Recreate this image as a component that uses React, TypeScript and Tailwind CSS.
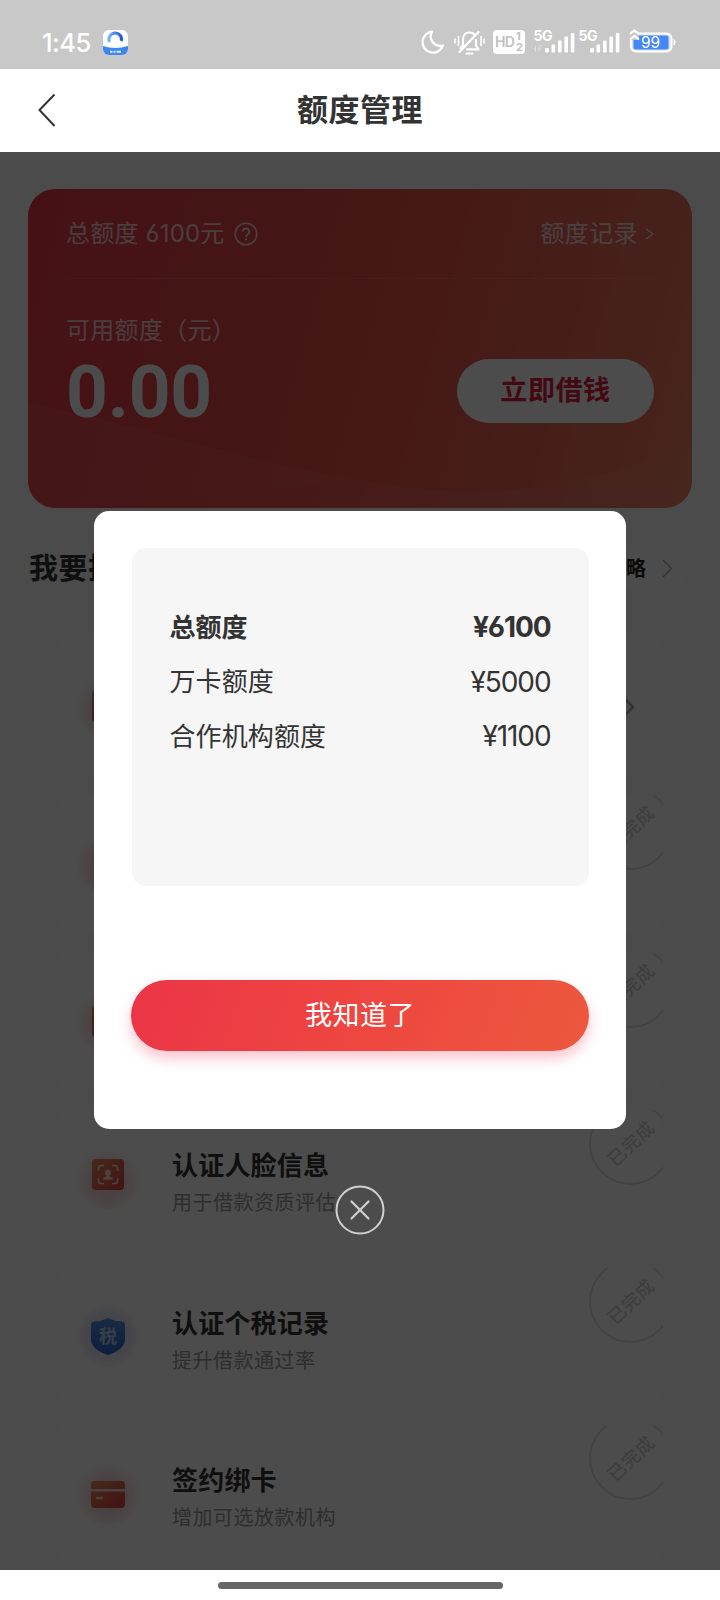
import React from "react";

function StatusBar() {
  return (
    <div className="flex h-[69px] items-start bg-[#c8c8c8] text-white">
      <div className="ml-[42px] mt-[29px] w-[51px] whitespace-nowrap text-[25.500px] font-medium leading-[28px] tracking-[-0.5px]">1:45</div>
      <svg className="ml-[10px] mt-[30px]" width="25" height="25" viewBox="0 0 25 25">
        <defs>
          <clipPath id="appClip"><rect width="25" height="25" rx="6" /></clipPath>
          <linearGradient id="arc" x1="0" x2="1"><stop offset="0" stopColor="#6fb6fb" /><stop offset="1" stopColor="#2455e0" /></linearGradient>
        </defs>
        <g clipPath="url(#appClip)">
          <rect width="25" height="25" fill="#fff" />
          <path d="M0 16 Q12 20 25 16 V25 H0Z" fill="#3d86ee" />
          <path d="M6.500 12 A6.300 6.300 0 1 1 18.300 11" fill="none" stroke="url(#arc)" strokeWidth="3" />
          <path d="M7 21.800h2.500M10.500 21.800h2M13.500 21.800h4.500" stroke="#d6e8ff" strokeWidth="2" />
        </g>
      </svg>
      <svg className="ml-[292px] mt-[28px]" width="26" height="28" viewBox="0 0 26 28" fill="none" stroke="#fff" strokeWidth="2.300" strokeLinejoin="round">
        <path d="M12 3.700A10.500 10.500 0 1 0 23 17.500A9.500 9.500 0 0 1 12 3.700Z" />
      </svg>
      <svg className="ml-[7px] mt-[27px]" width="32" height="30" viewBox="0 0 32 30" fill="none" stroke="#fff" strokeWidth="2.200" strokeLinecap="round" strokeLinejoin="round">
        <path d="M7.500 21L10 18.500v-6c0-4 2.500-7 6.500-7 2.500 0 4.400 1 5.600 2.800M14 22.300h11.500L23 18.500V13M6.500 25L25.500 5M13.500 26.500h6" />
        <path d="M5.500 9.500v9M2 12v4M28 9.500v9M31 12v4" strokeWidth="1.600" />
      </svg>
      <div className="ml-[8px] mt-[30px] flex h-[24px] w-[32px] items-center rounded-[4px] bg-white pl-[2px] text-[#c0c0c0]">
        <span className="text-[14px] font-semibold leading-[24px] tracking-[-0.8px]">HD</span>
        <span className="ml-[2px] flex flex-col text-[11px] font-bold leading-[11px]"><span>1</span><span>2</span></span>
      </div>
      <Signal sub />
      <Signal />
      <svg className="ml-[7px] mt-[28px]" width="48" height="26" viewBox="0 0 48 26">
        <rect x="3" y="5.500" width="40.500" height="18" rx="5" fill="#d9dde6" stroke="#fff" strokeWidth="2" />
        <rect x="5.500" y="7.500" width="35" height="14" rx="2" fill="#4388f7" />
        <path d="M46 11.500q2.500 2.500 0 5.500z" fill="#fff" stroke="#fff" />
        <path d="M1 5h10v7H1z" fill="#c8c8c8" />
        <path d="M2 6L6.500 2.500L11 6M2 11.500L6.500 8L11 11.500" fill="none" stroke="#fff" strokeWidth="2.200" />
        <text x="22.500" y="20" textAnchor="middle" fontSize="15.500" fill="#fff" fontFamily="Inter">99</text>
      </svg>
    </div>
  );
}

function Signal({ sub = false }: { sub?: boolean }) {
  return (
    <svg className={sub ? "ml-[7px] mt-[28px]" : "ml-[1px] mt-[28px]"} width="44" height="26" viewBox="0 0 44 26" fill="#fff">
      <text x="1.500" y="12.500" fontSize="14" fontWeight="700" fontFamily="Inter" letterSpacing="-0.400">5G</text>
      {sub && <path d="M1 21h3M3.500 18v6M7 18v6M7 18h3M7 21h2.500" stroke="#dedede" strokeWidth="1" />}
      <rect x="13" y="20" width="4" height="4.500" rx="1" />
      <rect x="19.500" y="16.500" width="3.600" height="8" rx="1" />
      <rect x="26" y="12.500" width="3.600" height="12" rx="1" />
      <rect x="32.400" y="8.500" width="3.600" height="16" rx="1" />
      <rect x="38.800" y="5" width="3.600" height="19.500" rx="1" />
    </svg>
  );
}

function QuotaCard() {
  return (
    <section className="relative mx-[28px] mt-[37px] h-[319px] overflow-hidden rounded-[27px] bg-linear-[105deg] from-[#e63b46] from-5% via-[#e9524a] via-55% to-[#ed7c60] text-white">
      <svg className="absolute inset-0" width="664" height="319" viewBox="0 0 664 319">
        <path d="M0 214C130 238 270 292 420 302C540 306 620 276 664 244V319H0Z" fill="#fff" fillOpacity="0.045" />
        <path d="M0 214C100 234 210 268 320 289C250 305 120 312 0 319Z" fill="#fff" fillOpacity="0.020" />
      </svg>
      <div className="relative flex h-full flex-col px-[38px]">
        <div className="flex h-[90px] items-center border-b border-white/10 pt-[1px] text-[24px] text-white/75">
          <span className="whitespace-pre tracking-[0.2px]">总额度 6100元</span>
          <svg className="ml-[9px]" width="24" height="24" viewBox="0 0 24 24" fill="none" stroke="currentColor" strokeWidth="1.600">
            <circle cx="12" cy="12" r="10.800" />
            <path d="M8.800 9.700a3.200 3.200 0 1 1 4.800 2.800c-1.200.7-1.600 1-1.600 2.200M12 16.300v2" strokeWidth="2" />
          </svg>
          <span className="ml-auto tracking-[0.4px]">额度记录</span>
          <svg className="ml-[7px]" width="9" height="12" viewBox="0 0 9 12" fill="none" stroke="currentColor" strokeWidth="1.500"><path d="M1 1l7 5-7 5" /></svg>
        </div>
        <div className="mt-[35px] h-[34px] whitespace-nowrap text-[24px] leading-[34px] text-white/75 tracking-[0.3px]">可用额度（元）</div>
        <div className="flex items-start">
          <div className="mt-[8px] font-['Roboto'] text-[73px] font-bold leading-[72px] tracking-[-0.2px] text-[#fafafa]">0.00</div>
          <div className="ml-auto mt-[11px] flex h-[64px] w-[197px] items-center justify-center rounded-full bg-white pt-[1px] text-[27px] font-bold tracking-[0.6px] text-[#e0203c]">立即借钱</div>
        </div>
      </div>
    </section>
  );
}

function Halo({ cool = false, children }: { cool?: boolean; children: React.ReactNode }) {
  return (
    <div className={cool
      ? "flex size-[64px] items-center justify-center rounded-full bg-[radial-gradient(circle,#e9eaf8_50%,#fff_72%)]"
      : "flex size-[64px] items-center justify-center rounded-full bg-[radial-gradient(circle_at_50%_55%,#f8dcdc_35%,#fff_72%)]"}>
      {children}
    </div>
  );
}

function Gradient({ id }: { id: string }) {
  return <linearGradient id={id} x1="0" y1="0" x2="1" y2="1"><stop offset="0" stopColor="#e88a58" /><stop offset="1" stopColor="#e04040" /></linearGradient>;
}

function SquareIcon({ id }: { id: string }) {
  return (
    <svg width="32" height="32" viewBox="0 0 32 32"><defs><Gradient id={id} /></defs><rect width="32" height="32" rx="4" fill={`url(#${id})`} /></svg>
  );
}

function FaceIcon() {
  return (
    <svg className="-mt-[7px]" width="32" height="31" viewBox="0 0 32 31">
      <defs><Gradient id="face" /></defs>
      <rect width="32" height="31" rx="4" fill="url(#face)" />
      <path d="M6.500 12V9q0-2.500 2.500-2.500h3M20 6.500h3q2.500 0 2.500 2.500v3M25.500 19v3q0 2.500-2.500 2.500h-3M12 24.500H9q-2.500 0-2.500-2.500v-3" fill="none" stroke="#fff" strokeWidth="1.600" opacity="0.800" />
      <path d="M16 10.500a3.200 3.200 0 0 1 1.500 6v1l3.500 1.500v1.500H11V19l3.500-1.500v-1a3.200 3.200 0 0 1 1.500-6z" fill="#fff" opacity="0.800" />
    </svg>
  );
}

function TaxIcon() {
  return (
    <svg className="mt-[1px]" width="36" height="39" viewBox="0 0 36 39">
      <defs><linearGradient id="tax" x1="0" y1="0" x2="0" y2="1"><stop offset="0" stopColor="#5590dd" /><stop offset="1" stopColor="#2f66d4" /></linearGradient></defs>
      <path d="M16 1.700Q18 .5 20 1.700Q25 4.500 31.500 4.500Q35 4.600 35 8V24C34 31 25 36 18 38C11 36 2 31 1 24V8Q1 4.600 4.500 4.500Q11 4.500 16 1.700Z" fill="url(#tax)" />
      <text x="18" y="25.500" textAnchor="middle" fontSize="18" fontWeight="700" fill="#fff" fillOpacity="0.650">税</text>
    </svg>
  );
}

function CardIcon() {
  return (
    <svg className="mt-[3px]" width="34" height="27" viewBox="0 0 34 27">
      <defs><Gradient id="bank" /></defs>
      <path d="M4 0h26q4 0 4 4v4H0V4q0-4 4-4zM0 10.500h34V23q0 4-4 4H4q-4 0-4-4z" fill="url(#bank)" />
      <path d="M5 17h7" stroke="#fff" strokeWidth="2.400" opacity="0.700" />
    </svg>
  );
}

type Item = { title: string; note: string; icon: React.ReactNode; cool?: boolean; done: boolean };

const items: Item[] = [
  { title: "", note: "", icon: <SquareIcon id="s1" />, done: false },
  { title: "", note: "", icon: null, done: true },
  { title: "", note: "", icon: <SquareIcon id="s3" />, done: true },
  { title: "认证人脸信息", note: "用于借款资质评估", icon: <FaceIcon />, done: true },
  { title: "认证个税记录", note: "提升借款通过率", icon: <TaxIcon />, cool: true, done: true },
  { title: "签约绑卡", note: "增加可选放款机构", icon: <CardIcon />, done: true },
];

function TaskRow({ item }: { item: Item }) {
  return (
    <div className="relative flex h-[136px] shrink-0 overflow-hidden rounded-[12px] bg-white pl-[19px]">
      <div className="mt-[36px]"><Halo cool={item.cool}>{item.icon}</Halo></div>
      <div className="ml-[32px] mt-[37px] whitespace-nowrap">
        <div className="h-[38px] text-[26px] font-bold leading-[38px] tracking-[0.2px] text-[#333]">{item.title}</div>
        <div className="h-[36px] text-[20px] font-normal leading-[36px] tracking-[0.5px] text-[#999]">{item.note}</div>
      </div>
      {item.done ? (
        <div className="absolute -top-[8px] left-[532px] flex size-[83px] items-center justify-center rounded-full border-2 border-[#e0e0e0] pl-[2px]">
          <span className="-rotate-[43deg] whitespace-nowrap text-[18px] font-medium tracking-[0.7px] text-[#d0d0d0]">已完成</span>
        </div>
      ) : (
        <svg className="ml-auto mr-[28px] mt-[60px]" width="12" height="18" viewBox="0 0 12 18" fill="none" stroke="#aaa" strokeWidth="2.500"><path d="M2 1l8 8-8 8" /></svg>
      )}
    </div>
  );
}

function QuotaRow({ label, value, bold = false }: { label: string; value: string; bold?: boolean }) {
  return (
    <div className="flex h-[54.300px] items-center justify-between">
      <span className={bold ? "text-[26px] font-bold" : "text-[26px] font-normal tracking-[0.1px]"}>{label}</span>
      <span className={bold ? "text-[28px] font-bold tracking-[-1.100px]" : "text-[28px] font-normal tracking-[-1.100px]"}>{value}</span>
    </div>
  );
}

function QuotaDialog() {
  return (
    <div className="absolute inset-0 flex flex-col items-center bg-black/70">
      <div className="mt-[358.500px] flex h-[618.500px] w-[532px] flex-col items-center rounded-[15px] bg-white">
        <div className="mt-[37px] h-[338px] w-[457px] rounded-[14px] bg-[#f6f6f6] px-[38px] pt-[52.800px] text-[#333]">
          <QuotaRow label="总额度" value="¥6100" bold />
          <QuotaRow label="万卡额度" value="¥5000" />
          <QuotaRow label="合作机构额度" value="¥1100" />
        </div>
        <button className="mt-[94px] h-[71px] w-[458px] rounded-full bg-linear-[110deg] from-[#eb3547] via-[#ee4640] to-[#ec583d] pt-[2px] text-[27px] font-normal tracking-[0.5px] text-white shadow-[0_7px_14px_rgba(235,53,85,0.300)]">我知道了</button>
      </div>
      <svg className="mt-[56px]" width="50" height="50" viewBox="0 0 50 50" fill="none" stroke="#d0d0d0" strokeWidth="2">
        <circle cx="25" cy="25" r="23.500" />
        <path d="M16.500 16.500l17 17M33.500 16.500L16.500 33.500" strokeWidth="2.200" strokeLinecap="round" />
      </svg>
    </div>
  );
}

export default function App() {
  return (
    <div className="flex h-[1600px] w-[720px] flex-col overflow-hidden bg-white font-['Inter','Noto_Sans_CJK_SC',sans-serif] [font-feature-settings:'cv03']">
      <StatusBar />
      <header className="flex h-[83px] items-center">
        <svg className="ml-[37px]" width="20" height="36" viewBox="0 0 20 36" fill="none" stroke="#333" strokeWidth="2"><path d="M17.500 1.500L2.500 17L17.500 33" /></svg>
        <h1 className="ml-[240px] text-[31px] font-bold tracking-[0.5px] text-[#333]">额度管理</h1>
      </header>
      <main className="relative h-[1418px] shrink-0 overflow-hidden bg-[#fafafa]">
        <QuotaCard />
        <div className="mt-[41px] flex h-[40px] items-center pl-[29px] pr-[32px]">
          <h2 className="text-[29px] font-bold tracking-[0.6px] text-[#333]">我要提额</h2>
          <div className="ml-auto flex h-[39px] items-center rounded-full bg-[#fdfdfd] pl-[20px] pr-[15px]">
            <span className="text-[20px] font-bold text-[#222]">略</span>
            <svg className="-mt-[2px] ml-[16px]" width="11" height="19" viewBox="0 0 11 19" fill="none" stroke="#aaa" strokeWidth="1.400"><path d="M1 1l8.500 8.500L1 18" /></svg>
          </div>
        </div>
        <div className="mx-[57px] mt-[49px] flex flex-col gap-[21.400px]">
          {items.map((item, i) => <TaskRow key={i} item={item} />)}
        </div>
        <QuotaDialog />
      </main>
      <footer className="flex h-[30px] shrink-0 justify-center bg-white pt-[12px]">
        <div className="h-[7px] w-[285px] rounded-full bg-[#666]" />
      </footer>
    </div>
  );
}
